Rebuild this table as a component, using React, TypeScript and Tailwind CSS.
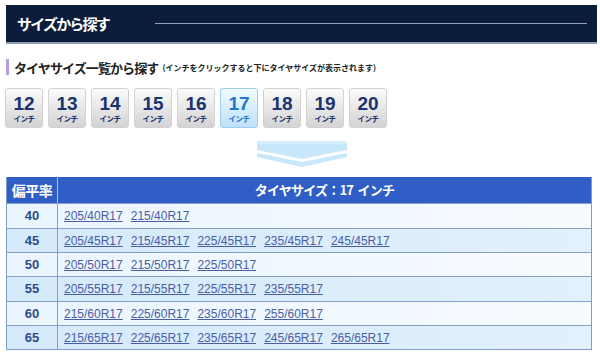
import React from 'react';

const sizes = [12, 13, 14, 15, 16, 17, 18, 19, 20];

const rows: { ratio: number; items: string[] }[] = [
  { ratio: 40, items: ['205/40R17', '215/40R17'] },
  { ratio: 45, items: ['205/45R17', '215/45R17', '225/45R17', '235/45R17', '245/45R17'] },
  { ratio: 50, items: ['205/50R17', '215/50R17', '225/50R17'] },
  { ratio: 55, items: ['205/55R17', '215/55R17', '225/55R17', '235/55R17'] },
  { ratio: 60, items: ['215/60R17', '225/60R17', '235/60R17', '255/60R17'] },
  { ratio: 65, items: ['215/65R17', '225/65R17', '235/65R17', '245/65R17', '265/65R17'] },
];

const jp = "font-['Noto_Sans_CJK_JP',sans-serif]";
const latin = "font-['Liberation_Sans','Noto_Sans_CJK_JP',sans-serif]";

const InchButton: React.FC<{ size: number; active: boolean }> = ({ size, active }) => {
  return (
    <button
      className={
        active
          ? 'w-[38px] h-[40px] rounded-[3px] border border-[#9ccff0] bg-gradient-to-b from-[#f2faff] to-[#bde1f8] flex flex-col items-center pt-[5px] cursor-pointer'
          : 'w-[38px] h-[40px] rounded-[3px] border border-[#d2d2d2] bg-gradient-to-b from-[#fbfbfb] to-[#d3d3d3] flex flex-col items-center pt-[5px] cursor-pointer'
      }
    >
      <span
        className={`${latin} text-[19px] font-bold leading-[20px] ${active ? 'text-[#2277c8]' : 'text-[#1b336e]'}`}
      >
        {size}
      </span>
      <span
        className={`${jp} text-[7.5px] font-bold leading-[9px] tracking-[-0.5px] ${active ? 'text-[#2277c8]' : 'text-[#1b336e]'}`}
      >
        インチ
      </span>
    </button>
  );
};

export default function App() {
  return (
    <div className="w-[600px] h-[356px] bg-white overflow-hidden">
      {/* section header */}
      <div className="pt-[5px] pl-[6px] pr-[3px]">
        <div className="h-[39px] bg-[#0b1d3b] border-b-2 border-[#8b9cb6] flex items-center pl-[11px] pr-[10px]">
          <h2 className={`${jp} text-white text-[15px] font-bold tracking-[-1.8px] leading-none`}>
            サイズから探す
          </h2>
          <div className="flex-1 h-px bg-[#8da2c2] ml-[46px]" />
        </div>
      </div>

      {/* sub title */}
      <div className="mt-[15px] ml-[6px] h-[16px] flex items-center">
        <div className="w-[3px] h-[16px] bg-[#b59ee0]" />
        <h3 className={`${jp} ml-[5px] text-[13px] font-bold text-[#222] tracking-[-0.9px] leading-none`}>
          タイヤサイズ一覧から探す
        </h3>
        <span className={`${jp} ml-[4px] mt-[2px] text-[8px] font-bold text-[#222] leading-none`}>
          (インチをクリックすると下にタイヤサイズが表示されます)
        </span>
      </div>

      {/* inch buttons */}
      <div className="mt-[13px] ml-[5px] h-[40px] flex gap-[5px]">
        {sizes.map((s) => (
          <InchButton key={s} size={s} active={s === 17} />
        ))}
      </div>

      {/* arrow */}
      <div className="mt-[13px] h-[26px] pl-[257px]">
        <svg width="90" height="26" viewBox="0 0 90 26">
          <polygon points="0,0 90,0 90,9 45,18 0,9" fill="#c7e7fb" />
          <polygon points="0,0 90,0 90,3 0,3" fill="#d6eefc" />
          <polygon points="0,12 45,21 90,12 90,16 45,26 0,16" fill="#c7e7fb" />
        </svg>
      </div>

      {/* size table */}
      <div className="mt-[10px] ml-[6px] w-[586px] border border-[#7f9cc4] border-t-0">
        <div className="h-[26px] bg-[#2f5ec6] flex">
          <div className={`${jp} w-[51px] border-r border-[#a9c2ee] flex items-center justify-center text-white text-[14px] font-bold tracking-[-0.5px]`}>
            偏平率
          </div>
          <div className={`${jp} flex-1 flex items-center justify-center text-white text-[13px] font-bold tracking-[-0.8px]`}>
            タイヤサイズ：17&nbsp;&nbsp;インチ
          </div>
        </div>
        {rows.map((r, i) => (
          <div
            key={r.ratio}
            className={
              (i % 3 === 0 ? 'h-[25px] ' : 'h-[24px] ') +
              (i % 2 === 0
                ? 'flex border-t border-[#859fc6] bg-gradient-to-r from-[#ebf5fe] to-[#f6fbff]'
                : 'flex border-t border-[#859fc6] bg-gradient-to-r from-[#d4e9fa] to-[#e2f1fc]')
            }
          >
            <div className={`${latin} w-[51px] border-r border-[#859fc6] flex items-center justify-center text-[13px] font-bold text-[#2e4c8c]`}>
              {r.ratio}
            </div>
            <div className="flex-1 flex items-center pl-[6px] gap-[8px]">
              {r.items.map((it) => (
                <a key={it} href="#" className={`${latin} text-[12px] text-[#4a5ea6] underline`}>
                  {it}
                </a>
              ))}
            </div>
          </div>
        ))}
      </div>
    </div>
  );
}
